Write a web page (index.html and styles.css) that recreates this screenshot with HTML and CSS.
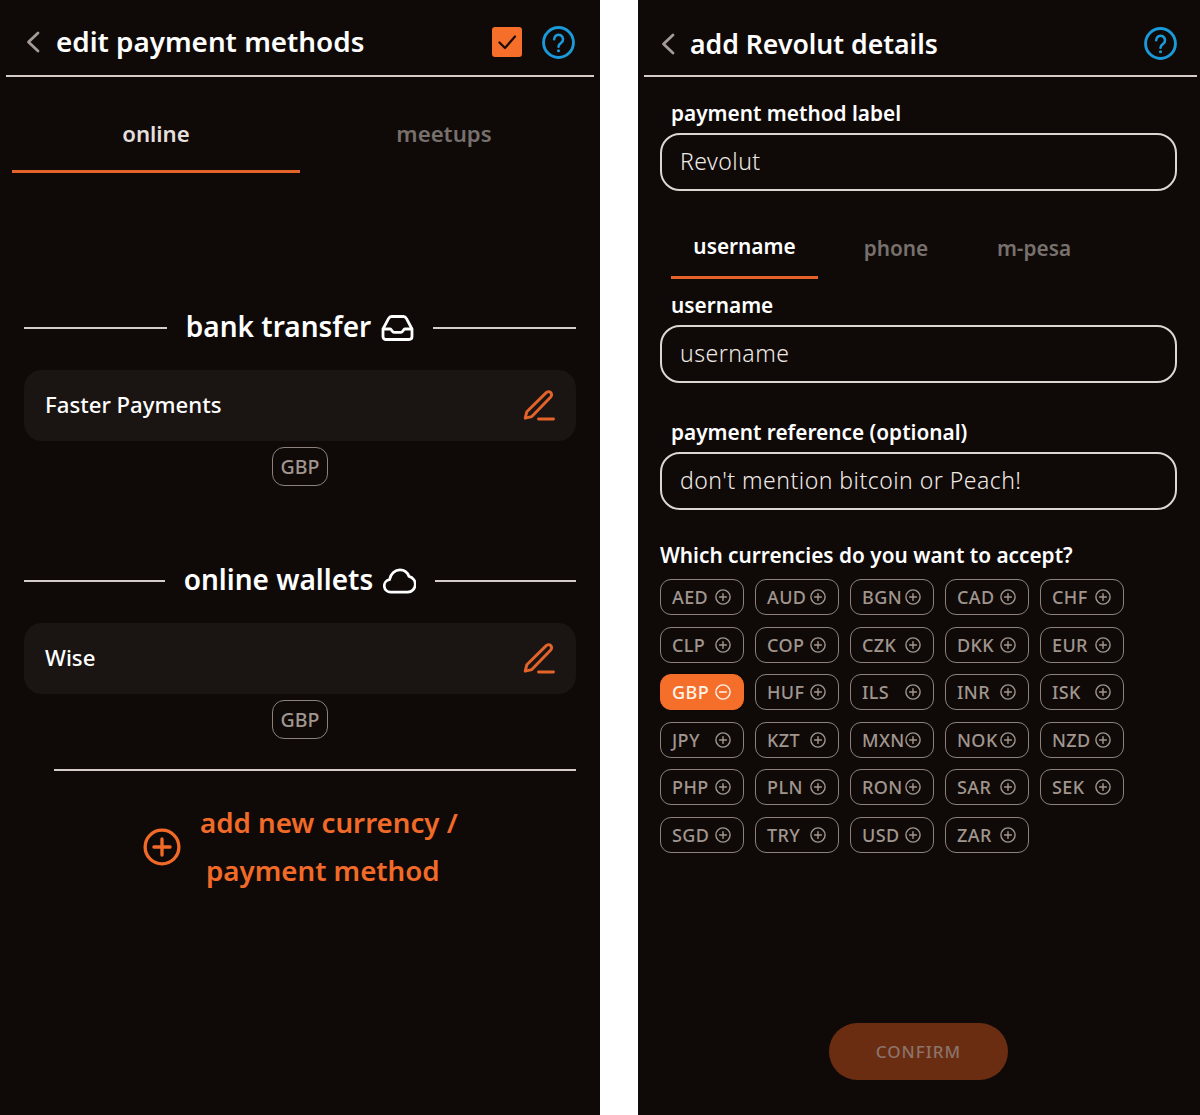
FILE: index.html
```html
<!DOCTYPE html>
<html lang="en">
<head>
<meta charset="utf-8">
<title>Payment methods</title>
<link rel="stylesheet" href="styles.css">
</head>
<body>
<svg class="defs" width="0" height="0" aria-hidden="true">
  <symbol id="plus" viewBox="0 0 16 16"><circle cx="8" cy="8" r="7.1" fill="none" stroke="currentColor" stroke-width="1.4"/><path d="M8 4.6v6.8M4.6 8h6.8" fill="none" stroke="currentColor" stroke-width="1.4" stroke-linecap="round"/></symbol>
  <symbol id="minus" viewBox="0 0 16 16"><circle cx="8" cy="8" r="7.1" fill="none" stroke="currentColor" stroke-width="1.4"/><path d="M4.6 8h6.8" fill="none" stroke="currentColor" stroke-width="1.4" stroke-linecap="round"/></symbol>
  <symbol id="help" viewBox="0 0 32 32"><circle cx="16" cy="16" r="14.5" fill="none" stroke="currentColor" stroke-width="2.8"/><path d="M11.800 12.800a4.300 4.300 0 1 1 6.800 3.500c-1.700 1.100-2.600 2-2.600 3.700" fill="none" stroke="currentColor" stroke-width="2.500" stroke-linecap="round"/><circle cx="16" cy="24" r="1.500" fill="currentColor"/></symbol>
  <symbol id="back" viewBox="0 0 14 22"><path d="M12 2 2.500 11 12 20" fill="none" stroke="currentColor" stroke-width="2.800" stroke-linecap="round" stroke-linejoin="round"/></symbol>
  <symbol id="edit" viewBox="0 0 32 32"><path d="M2.200 28.200 3.800 21.800 23 2.900c1.500-1.500 3.500-1.500 4.700-.3 1.300 1.300 1.200 3.200-.2 4.600L8.800 26.600Z" fill="none" stroke="currentColor" stroke-width="2.900" stroke-linejoin="round"/><path d="M15.500 29h15" fill="none" stroke="currentColor" stroke-width="2.900" stroke-linecap="round"/></symbol>
</svg>

<main class="panel panel-left">
  <header class="topbar topbar-left">
    <svg class="back"><use href="#back"/></svg>
    <h1 class="title title-left">edit payment methods</h1>
    <span class="checkbox"><svg viewBox="0 0 30 30"><path d="M7.500 15.500 13 21 23 9.500" fill="none" stroke="#1a0d06" stroke-width="2.200" stroke-linecap="round" stroke-linejoin="round"/></svg></span>
    <svg class="help"><use href="#help"/></svg>
  </header>

  <nav class="tabs-wide">
    <span class="wide-tab is-active">online</span>
    <span class="wide-tab">meetups</span>
  </nav>

  <section class="group group-bank">
    <div class="group-head">
      <span class="rule"></span>
      <h2 class="group-title">bank transfer
        <svg class="group-icon" viewBox="0 0 32 26"><path d="M1.500 14 7 3.600C7.700 2.300 8.700 1.500 10.200 1.500h11.600c1.500 0 2.500.8 3.200 2.100L30.500 14v7.500c0 1.800-1.200 3-3 3h-23c-1.800 0-3-1.200-3-3Z" fill="none" stroke="currentColor" stroke-width="2.800" stroke-linejoin="round"/><path d="M1.500 14h7.200c1.400 0 1.900 3.400 4 3.400h6.600c2.100 0 2.600-3.400 4-3.400h7.200" fill="none" stroke="currentColor" stroke-width="2.800" stroke-linejoin="round"/></svg>
      </h2>
      <span class="rule"></span>
    </div>
    <div class="method-card"><span class="method-name">Faster Payments</span><svg class="edit"><use href="#edit"/></svg></div>
    <span class="code-pill">GBP</span>
  </section>

  <section class="group group-wallets">
    <div class="group-head">
      <span class="rule"></span>
      <h2 class="group-title">online wallets
        <svg class="group-icon" viewBox="0 0 34 26"><path d="M8 24.500a6.500 6.500 0 0 1-1.300-12.900C7.900 5.700 12.400 1.500 17.500 1.500c4.200 0 7.900 2.800 9.300 6.800A8.200 8.200 0 0 1 25.500 24.500Z" fill="none" stroke="currentColor" stroke-width="2.800" stroke-linejoin="round"/></svg>
      </h2>
      <span class="rule"></span>
    </div>
    <div class="method-card"><span class="method-name">Wise</span><svg class="edit"><use href="#edit"/></svg></div>
    <span class="code-pill">GBP</span>
  </section>

  <hr class="divider">

  <div class="add-new">
    <svg class="add-icon"><use href="#plus"/></svg>
    <div class="add-text">add new currency /<br><span class="add-second">payment method</span></div>
  </div>
</main>

<div class="gap"></div>

<main class="panel panel-right">
  <header class="topbar topbar-right">
    <svg class="back"><use href="#back"/></svg>
    <h1 class="title title-right">add Revolut details</h1>
    <svg class="help"><use href="#help"/></svg>
  </header>

  <div class="form">
    <label class="label label-first">payment method label</label>
    <div class="field">Revolut</div>

    <nav class="tabs-small">
      <span class="small-tab is-active">username</span>
      <span class="small-tab tab-phone">phone</span>
      <span class="small-tab tab-mpesa">m-pesa</span>
    </nav>

    <label class="label label-user">username</label>
    <div class="field">username</div>

    <label class="label label-ref">payment reference (optional)</label>
    <div class="field">don't mention bitcoin or Peach!</div>

    <h3 class="question">Which currencies do you want to accept?</h3>
    <div class="currency-grid">
      <span class="cur">AED<svg><use href="#plus"/></svg></span>
      <span class="cur">AUD<svg><use href="#plus"/></svg></span>
      <span class="cur">BGN<svg><use href="#plus"/></svg></span>
      <span class="cur">CAD<svg><use href="#plus"/></svg></span>
      <span class="cur">CHF<svg><use href="#plus"/></svg></span>
      <span class="cur">CLP<svg><use href="#plus"/></svg></span>
      <span class="cur">COP<svg><use href="#plus"/></svg></span>
      <span class="cur">CZK<svg><use href="#plus"/></svg></span>
      <span class="cur">DKK<svg><use href="#plus"/></svg></span>
      <span class="cur">EUR<svg><use href="#plus"/></svg></span>
      <span class="cur cur-on">GBP<svg><use href="#minus"/></svg></span>
      <span class="cur">HUF<svg><use href="#plus"/></svg></span>
      <span class="cur">ILS<svg><use href="#plus"/></svg></span>
      <span class="cur">INR<svg><use href="#plus"/></svg></span>
      <span class="cur">ISK<svg><use href="#plus"/></svg></span>
      <span class="cur">JPY<svg><use href="#plus"/></svg></span>
      <span class="cur">KZT<svg><use href="#plus"/></svg></span>
      <span class="cur">MXN<svg><use href="#plus"/></svg></span>
      <span class="cur">NOK<svg><use href="#plus"/></svg></span>
      <span class="cur">NZD<svg><use href="#plus"/></svg></span>
      <span class="cur">PHP<svg><use href="#plus"/></svg></span>
      <span class="cur">PLN<svg><use href="#plus"/></svg></span>
      <span class="cur">RON<svg><use href="#plus"/></svg></span>
      <span class="cur">SAR<svg><use href="#plus"/></svg></span>
      <span class="cur">SEK<svg><use href="#plus"/></svg></span>
      <span class="cur">SGD<svg><use href="#plus"/></svg></span>
      <span class="cur">TRY<svg><use href="#plus"/></svg></span>
      <span class="cur">USD<svg><use href="#plus"/></svg></span>
      <span class="cur">ZAR<svg><use href="#plus"/></svg></span>
    </div>
    <div class="confirm-wrap"><button class="confirm">CONFIRM</button></div>
  </div>
</main>
</body>
</html>
```

FILE: styles.css
```css
* { box-sizing: border-box; }
html, body { margin: 0; padding: 0; }
body {
  width: 1200px;
  height: 1115px;
  display: flex;
  background: #fff;
  font-family: "Noto Sans", "Open Sans", sans-serif;
  color: #fff;
  overflow: hidden;
}
.defs { position: absolute; }
.panel { background: #0f0a08; height: 1115px; }
.panel-left { width: 600px; padding: 0 6px; }
.panel-right { width: 562px; padding: 0 3px 0 6px; }
.gap { width: 38px; }

.topbar { height: 77px; display: flex; align-items: center; border-bottom: 2px solid #d6cdc8; }
.topbar-left { padding: 9px 19px 0 20px; }
.topbar-right { padding: 12px 20px 0 17px; }
.back { width: 14px; height: 22px; color: #a49b96; flex: none; }
.title { margin: 0 0 0 16px; font-size: 27.8px; line-height: 34px; font-weight: 600; flex: 1; }
.title-left { margin-bottom: 2px; }
.title-right { margin-left: 15px; font-size: 26.6px; }
.checkbox { width: 30px; height: 30px; background: #f56f2a; border-radius: 3px; margin-right: 20px; display: block; }
.checkbox svg { display: block; width: 30px; height: 30px; }
.help { width: 33px; height: 33px; color: #1a9ad9; flex: none; }

.tabs-wide { display: flex; padding: 0 6px; height: 96px; }
.wide-tab { width: 288px; text-align: center; padding-top: 44px; font-size: 22.2px; line-height: 26px; font-weight: 600; color: #77706c; height: 96px; }
.wide-tab.is-active { color: #e6dfdb; border-bottom: 3px solid #e3632a; }

.group { padding: 0 18px; display: flex; flex-direction: column; align-items: center; }
.group-bank { margin-top: 138px; }
.group-wallets { margin-top: 78px; }
.group-head { width: 100%; display: flex; align-items: center; height: 34px; }
.rule { flex: 1; height: 2px; background: #d6cdc8; }
.group-title { margin: 0; padding: 0 19px 4px; font-size: 28px; line-height: 34px; font-weight: 600; display: flex; align-items: center; gap: 10px; white-space: nowrap; }
.group-icon { width: 33px; height: 26px; display: block; margin-top: 4px; }
.method-card { margin-top: 25px; width: 100%; height: 71px; background: #1a1513; border-radius: 18px; display: flex; align-items: center; justify-content: space-between; padding: 0 21px; }
.method-name { font-size: 22.2px; font-weight: 500; padding-bottom: 2px; }
.edit { width: 32px; height: 32px; color: #e3632a; }
.code-pill { margin-top: 6px; width: 56px; height: 39px; border: 1.8px solid #8c817b; border-radius: 12px; color: #a1968f; font-size: 19.5px; font-weight: 500; display: flex; align-items: center; justify-content: center; }

.divider { margin: 30px 18px 0 48px; border: 0; height: 2px; background: #d6cdc8; }
.add-new { margin: 29px 0 0 137px; display: flex; align-items: center; gap: 19px; }
.add-icon { width: 38px; height: 38px; color: #f26a28; flex: none; }
.add-text { font-size: 27.7px; line-height: 48px; font-weight: 600; color: #f26a28; margin-top: -2px; }
.add-second { padding-left: 6px; }

.form { padding: 0 20px 0 16px; }
.label { display: block; font-size: 20.8px; line-height: 26px; font-weight: 600; padding-left: 11px; }
.label-first { margin-top: 23px; }
.label-user { margin-top: 13px; }
.label-ref { margin-top: 36px; }
.field { margin-top: 7px; height: 58px; border: 2px solid #ded6d1; border-radius: 20px; padding: 0 0 2px 18px; display: flex; align-items: center; font-size: 23px; font-weight: 300; letter-spacing: .48px; color: #efe9e5; }

.tabs-small { margin-top: 33px; padding-left: 11px; display: flex; height: 55px; }
.small-tab { font-size: 20.8px; font-weight: 600; line-height: 26px; color: #77706c; padding-top: 11px; text-align: center; }
.small-tab.is-active { width: 147px; color: #fff; padding-top: 9px; border-bottom: 3px solid #e3632a; }
.tab-phone { width: 156px; }
.tab-mpesa { width: 120px; }

.question { margin: 32px 0 0; font-size: 20.8px; line-height: 26px; font-weight: 600; }
.currency-grid { margin-top: 11px; display: grid; grid-template-columns: repeat(5, 84px); column-gap: 11px; row-gap: 11.5px; grid-auto-rows: 36px; }
.cur { border: 1.8px solid #8c817b; border-radius: 11px; display: flex; align-items: center; justify-content: space-between; padding: 0 12px 0 11px; color: #a1968f; font-size: 18px; font-weight: 500; letter-spacing: .4px; }
.cur svg { width: 16px; height: 16px; flex: none; }
.cur-on { background: #f56f2a; border-color: #f56f2a; color: #fff3ea; }

.confirm-wrap { margin-top: 170px; padding-left: 169px; }
.confirm { width: 179px; height: 57px; border: 0; border-radius: 29px; background: #6a2d12; color: #8b7469; font-family: inherit; font-size: 17px; font-weight: 500; letter-spacing: 1px; padding: 0; }
```
